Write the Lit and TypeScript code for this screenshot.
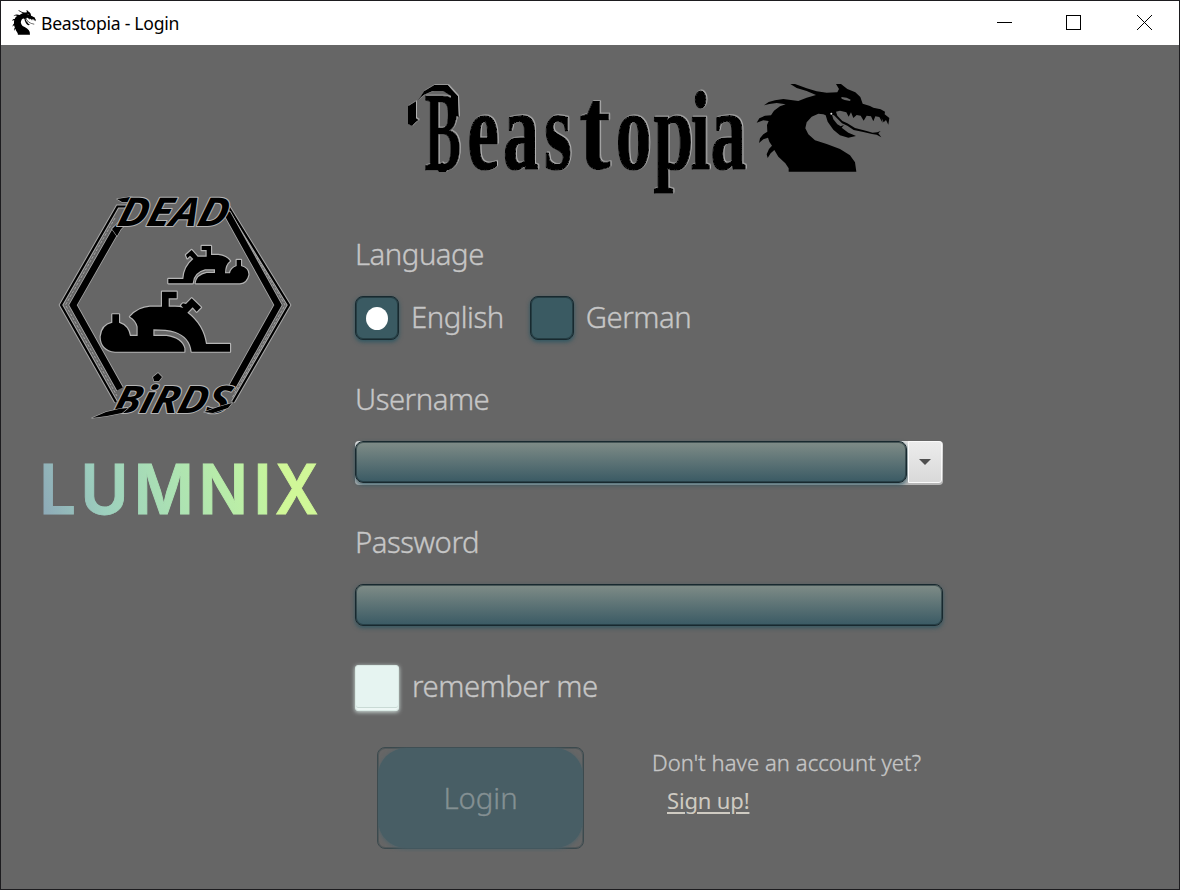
import { LitElement, html, css, svg } from "lit";
import { customElement, property, state } from "lit/decorators.js";
import { classMap } from "lit/directives/class-map.js";

const dragonBody =
  "M446 290V280L436 265 415 245 403 225 392 235 383 249 380 238 387 222 396 212 388 200 384 188 370 193 357 204 360 190 370 178 382 170 381 150 386 138 370 136 350 143 358 130 375 122 393 121 402 107 420 94 437 88 410 84 388 87 372 91 386 81 405 76 430 72 475 78 500 68 528 60 500 48 470 39 451 27H465L500 40 530 49 560 53 592 52 597 42 588 27H603L622 42 646 52 661 66 668 86 690 93 700 98 722 103 735 110 734 118 748 129 745 149 738 135 731 142 725 130 728 144 718 126 706 124 700 139 693 124 680 122 671 137 662 122 650 120 640 129 633 112 626 125 619 112 600 107 588 110 592 122 607 138 622 145 645 159 680 168 698 173 712 172 722 168 715 175 724 187 710 179 696 177 670 171 641 165 622 152 606 145 582 121 576 119 580 133 592 148 602 154 612 150 605 158 625 173 636 178 648 183 625 188 600 181 580 164 563 140 557 121 550 118 535 116 515 125 500 142 496 160 505 178 525 196 560 207 600 222 630 241 645 262 649 290Z";

const dragon = svg`
  <path d=${dragonBody} fill="#000"/>
  <path d="M604 66L620 68 632 74 630 78 614 75 605 71Z" fill="#666"/>
  <circle cx="574" cy="116" r="3" fill="#e4e4e4"/>`;

@customElement("title-bar")
class TitleBar extends LitElement {
  @property() caption = "";
  static styles = css`
    :host { display: flex; height: 44px; background: #fff; color: #000; align-items: center;
      font: 17.6px/24px "Noto Sans", "Open Sans", sans-serif; }
    .icon { width: 24px; height: 25px; margin: 0 0 2px 11px; }
    .caption { margin-left: 5px; letter-spacing: -0.28px; flex: 1; padding-bottom: 1px; white-space: nowrap; }
    .buttons { display: flex; height: 44px; }
    .btn { width: 70px; height: 44px; display: block; }
  `;
  render() {
    return html`
      <svg class="icon" viewBox="348 25 402 268" preserveAspectRatio="none">${dragon}</svg>
      <span class="caption">${this.caption}</span>
      <div class="buttons">
        <svg class="btn" viewBox="0 0 70 44"><path d="M28 21.5h15" stroke="#000"/></svg>
        <svg class="btn" viewBox="0 0 70 44"><rect x="27.5" y="14.5" width="14" height="14" fill="none" stroke="#000"/></svg>
        <svg class="btn" viewBox="0 0 70 44"><path d="M28 14l15 15M43 14L28 29" stroke="#000" fill="none"/></svg>
      </div>`;
  }
}

@customElement("brand-logo")
class BrandLogo extends LitElement {
  static styles = css`
    :host { display: block; width: 500px; height: 125px; }
    svg { display: block; overflow: visible; }
    .word { font-family: "Liberation Serif", serif; font-weight: 700; stroke: #000; stroke-linejoin: bevel; }
  `;
  render() {
    return html`<svg width="500" height="125" viewBox="400 75 500 125">
      <defs>
        <filter id="edge" x="-5%" y="-5%" width="110%" height="110%">
          <feDropShadow dx="0.9" dy="-0.6" stdDeviation="0.25" flood-color="#b8b8b8"/>
        </filter>
      </defs>
      <g filter="url(#edge)">
        <g class="word" transform="translate(425 170) scale(0.49 1)">
          <text font-size="112" x="-1" y="0">B</text>
        </g>
        <g class="word" transform="translate(0 169) scale(0.64 1)" stroke-width="1.6">
          <text font-size="112" x="730 786 850" y="0">eas</text>
          <text font-size="112" x="962 1021 1079" y="0">opi</text>
          <text font-size="112" x="1110" y="0">a</text>
        </g>
        <g class="word" transform="translate(580 169) scale(0.84 1.06)">
          <text font-size="112" x="-1" y="0">t</text>
        </g>
        <path d="M408 106V124L412 126 416 122 419 120 416 118V101Z"/>
        <path d="M418 100L424 91 434 85H448L458 96 459 117 451 115V96L443 91H433L424 95Z"/>
        <path d="M436 168L442 162 449 168 446 172H439Z"/>
      </g>
      <g transform="translate(640 75) scale(0.33333)">${dragon}</g>
    </svg>`;
  }
}

@customElement("studio-logo")
class StudioLogo extends LitElement {
  static styles = css`
    :host { display: block; }
    svg { display: block; overflow: visible; }
    .script { font-family: "Open Sans", sans-serif; font-weight: 700; font-style: italic; }
    .lit { stroke: #b4b4b4; stroke-width: 2; paint-order: stroke; stroke-linejoin: round; }
    .bird { stroke-width: 7; }
    .fine { stroke-width: 1.2; }
  `;
  render() {
    const outer = "M128 206.5H117.500L61 305 116 402M228 206L289 305 233 402";
    const inner = "M117 228L73 305 120 389M227 213L278 305 231 389";
    return html`<svg width="250" height="245" viewBox="50 185 250 245">
      <g fill="none" stroke-linejoin="miter">
        <path d=${outer} stroke="#a8a8a8" stroke-width="4.200"/>
        <path d=${outer} stroke="#000" stroke-width="2.200"/>
        <path d="M115 218L65.500 305 117 396M230 212L285 305 232 398" stroke="#a0a0a0" stroke-width="1" stroke-dasharray="3 1.4"/>
        <path d=${inner} stroke="#a8a8a8" stroke-width="8.200"/>
        <path d=${inner} stroke="#000" stroke-width="6.600"/>
      </g>
      <g class="lit bird" transform="translate(50 185) scale(0.33333)">
        <path d="M355 282H400Q402 245 430 222L420 212 412 220 408 210 425 195 443 215H470V195H455V183H483V210H505Q530 213 540 228 525 238 525 265H540Q542 250 560 243V225H573V243Q597 250 595 270 590 293 570 295H437Q440 270 470 264H495V253H465Q430 262 428 295H355Z"/>
      </g>
      <g class="lit bird" transform="translate(50 300) scale(0.33333)">
        <path d="M187 68V43H207V68Q236 78 240 108H263V80Q258 60 240 50 265 22 300 20H336V-25H380V-5H356V20H375Q390 20 400 24L393 16 399 10 408 12 425-5 453 22 440 35 428 22 412 38Q460 75 468 132H540V155H425Q420 110 375 95 350 88 310 88V108H350Q395 115 403 145V155H195Q153 150 152 110 155 75 187 68Z"/>
      </g>
      <g class="script lit">
        <path class="fine" d="M117 199L130 197 143 199 134 202 122 202ZM112 229L119 222 128 222 121 229 117 236Z"/>
        <text transform="translate(116 226) skewX(-14)" font-size="39.500" textLength="109" lengthAdjust="spacingAndGlyphs">DEAD</text>
        <text transform="translate(112 412.500) skewX(-14)" font-size="38" textLength="115" lengthAdjust="spacingAndGlyphs">BiRDS</text>
        <path class="fine" d="M92 418L106 412 119 409 128 408 122 413 107 416ZM204 412L218 407 232 403 228 408 213 413ZM153 377L158 373 162 377 159 381H154Z"/>
      </g>
    </svg>`;
  }
}

@customElement("lumnix-logo")
class LumnixLogo extends LitElement {
  static styles = css`
    :host { display: block; }
    svg { display: block; overflow: visible; }
    .letters { font: 600 68.5px "Inter", sans-serif; }
  `;
  render() {
    return html`<svg width="284" height="60" viewBox="38 459 284 60">
      <defs>
        <linearGradient id="g" gradientUnits="userSpaceOnUse" x1="50" y1="524" x2="324" y2="450">
          <stop offset="0" stop-color="#8eabb8"/><stop offset="0.22" stop-color="#9dd0bd"/>
          <stop offset="0.48" stop-color="#ace2b3"/><stop offset="0.78" stop-color="#c0f2a3"/>
          <stop offset="0.9" stop-color="#cef694"/><stop offset="1" stop-color="#dcfbaa"/>
        </linearGradient>
      </defs>
      <g transform="scale(0.95 1)" fill="url(#g)" stroke="url(#g)" stroke-width="0.9">
        <text class="letters" y="514" x="41.4 84.700 140.700 209 266.800">LUMNI</text>
      </g>
      <g transform="translate(275.500 0) scale(0.88 1)" fill="#d0f798" stroke="#d0f798" stroke-width="0.9">
        <text class="letters" y="514" x="-0.5">X</text>
      </g>
    </svg>`;
  }
}

@customElement("app-root")
class AppRoot extends LitElement {
  @state() private language = "English";

  static styles = css`
    * { box-sizing: border-box; }
    :host { display: flex; flex-direction: column; width: 1180px; height: 890px; overflow: hidden;
      box-sizing: border-box; border: 1px solid #1d1c1f; background: #666; color: #c6c6c6;
      font: 29.3px/40px "Noto Sans", "Open Sans", sans-serif; font-weight: 300; letter-spacing: -0.48px;
      -webkit-text-stroke: 0.35px currentColor; }
    title-bar { -webkit-text-stroke: 0; }
    .content { display: flex; flex: 1; min-height: 0; }
    .side { width: 354px; display: flex; flex-direction: column; padding-top: 140px; }
    .side studio-logo { margin-left: 49px; }
    .side lumnix-logo { margin: 29px 0 0 37px; }
    .main { width: 588px; display: flex; flex-direction: column; padding-top: 30px; }
    .main brand-logo { margin-left: 45px; }
    .label { height: 40px; margin-top: 34px; white-space: nowrap; }
    .radios { display: flex; margin-top: 22px; height: 44px; align-items: center; }
    .radio { display: flex; align-items: center; gap: 12px; margin-right: 26px; white-space: nowrap; }
    .text { margin-top: -2px; }
    .box { width: 44px; height: 44px; border: 1px solid #18292f; border-radius: 8px; background: #3a5a62;
      box-shadow: inset 0 0 0 1px rgba(24, 41, 47, 0.6), 0 2px 4px rgba(40, 84, 96, 0.9);
      display: grid; place-items: center; }
    .on::after { content: ""; width: 22px; height: 23px; border-radius: 50%; background: #fff; }
    .username { margin-top: 39px; }
    .field { height: 42px; border: 1px solid #18292f; border-radius: 8px;
      background: linear-gradient(#7f8c87, #3a5a64);
      box-shadow: inset 0 0 0 1px rgba(24, 41, 47, 0.55), 0 2px 4px rgba(40, 84, 96, 0.8); }
    .combo { display: flex; height: 44px; margin-top: 22px; border-radius: 4px;
      background: linear-gradient(#e4e4e4, #b5b5b5); }
    .combo .field { width: 552px; }
    .arrow { flex: 1; margin: 0 1px 2px 1px; border: 1px solid #fafafa; border-radius: 0 3px 3px 0;
      background: linear-gradient(#ececec, #d9d9d9); display: grid; place-items: center; }
    .arrow svg { margin-top: -1px; }
    .password-label { margin-top: 37px; }
    .password { margin-top: 22px; }
    .remember { display: flex; align-items: center; height: 46px; margin-top: 39px; gap: 13px; white-space: nowrap; }
    .remember .text { margin-top: -4px; }
    .check { width: 44px; height: 46px; border-radius: 3px; background: #e6f4f1; border: 1px solid #d9e9e4;
      box-shadow: 0 1px 4px #d7e6e2, inset 0 -2px 0 #edf7f5, inset 0 -3px 0 #c9dad5; }
    .actions { display: flex; margin-top: 36px; padding-left: 22px; }
    .login { width: 207px; height: 102px; border: 1px solid #3c4a4e; border-radius: 8px; display: grid;
      box-shadow: inset 0 0 0 1px rgba(60, 74, 78, 0.5);
      place-items: center; color: #849093; position: relative; isolation: isolate; letter-spacing: 0; }
    .login::before { content: ""; position: absolute; z-index: -1; inset: 0; border-radius: 28px;
      background: #485e65; box-shadow: 0 1px 4px #4a626a; clip-path: inset(-1px 0 -4px 0); }
    .signup { margin-left: 68px; font-size: 22px; line-height: 30px; white-space: nowrap; letter-spacing: 0.07px; }
    .link { display: block; margin: 8px 0 0 15px; text-decoration: underline; text-decoration-thickness: 1.5px;
      text-underline-offset: 3px; color: #cfcbc2; font-weight: 400; letter-spacing: -0.15px; -webkit-text-stroke: 0; }
  `;

  private radio(name: string) {
    return html`<div class="radio" @click=${() => (this.language = name)}>
      <span class=${classMap({ box: true, on: this.language === name })}></span><span class="text">${name}</span>
    </div>`;
  }

  render() {
    return html`
      <title-bar caption="Beastopia - Login"></title-bar>
      <div class="content">
        <div class="side">
          <studio-logo></studio-logo>
          <lumnix-logo></lumnix-logo>
        </div>
        <div class="main">
          <brand-logo></brand-logo>
          <div class="label">Language</div>
          <div class="radios">${this.radio("English")}${this.radio("German")}</div>
          <div class="label username">Username</div>
          <div class="combo">
            <div class="field"></div>
            <div class="arrow"><svg width="12" height="7" viewBox="0 0 12 7"><path d="M0 1H12L6 7Z" fill="#4f4f4f"/></svg></div>
          </div>
          <div class="label password-label">Password</div>
          <div class="field password"></div>
          <div class="remember"><span class="check"></span><span class="text">remember me</span></div>
          <div class="actions">
            <div class="login">Login</div>
            <div class="signup"><span>Don't have an account yet?</span><a class="link">Sign up!</a></div>
          </div>
        </div>
      </div>`;
  }
}
